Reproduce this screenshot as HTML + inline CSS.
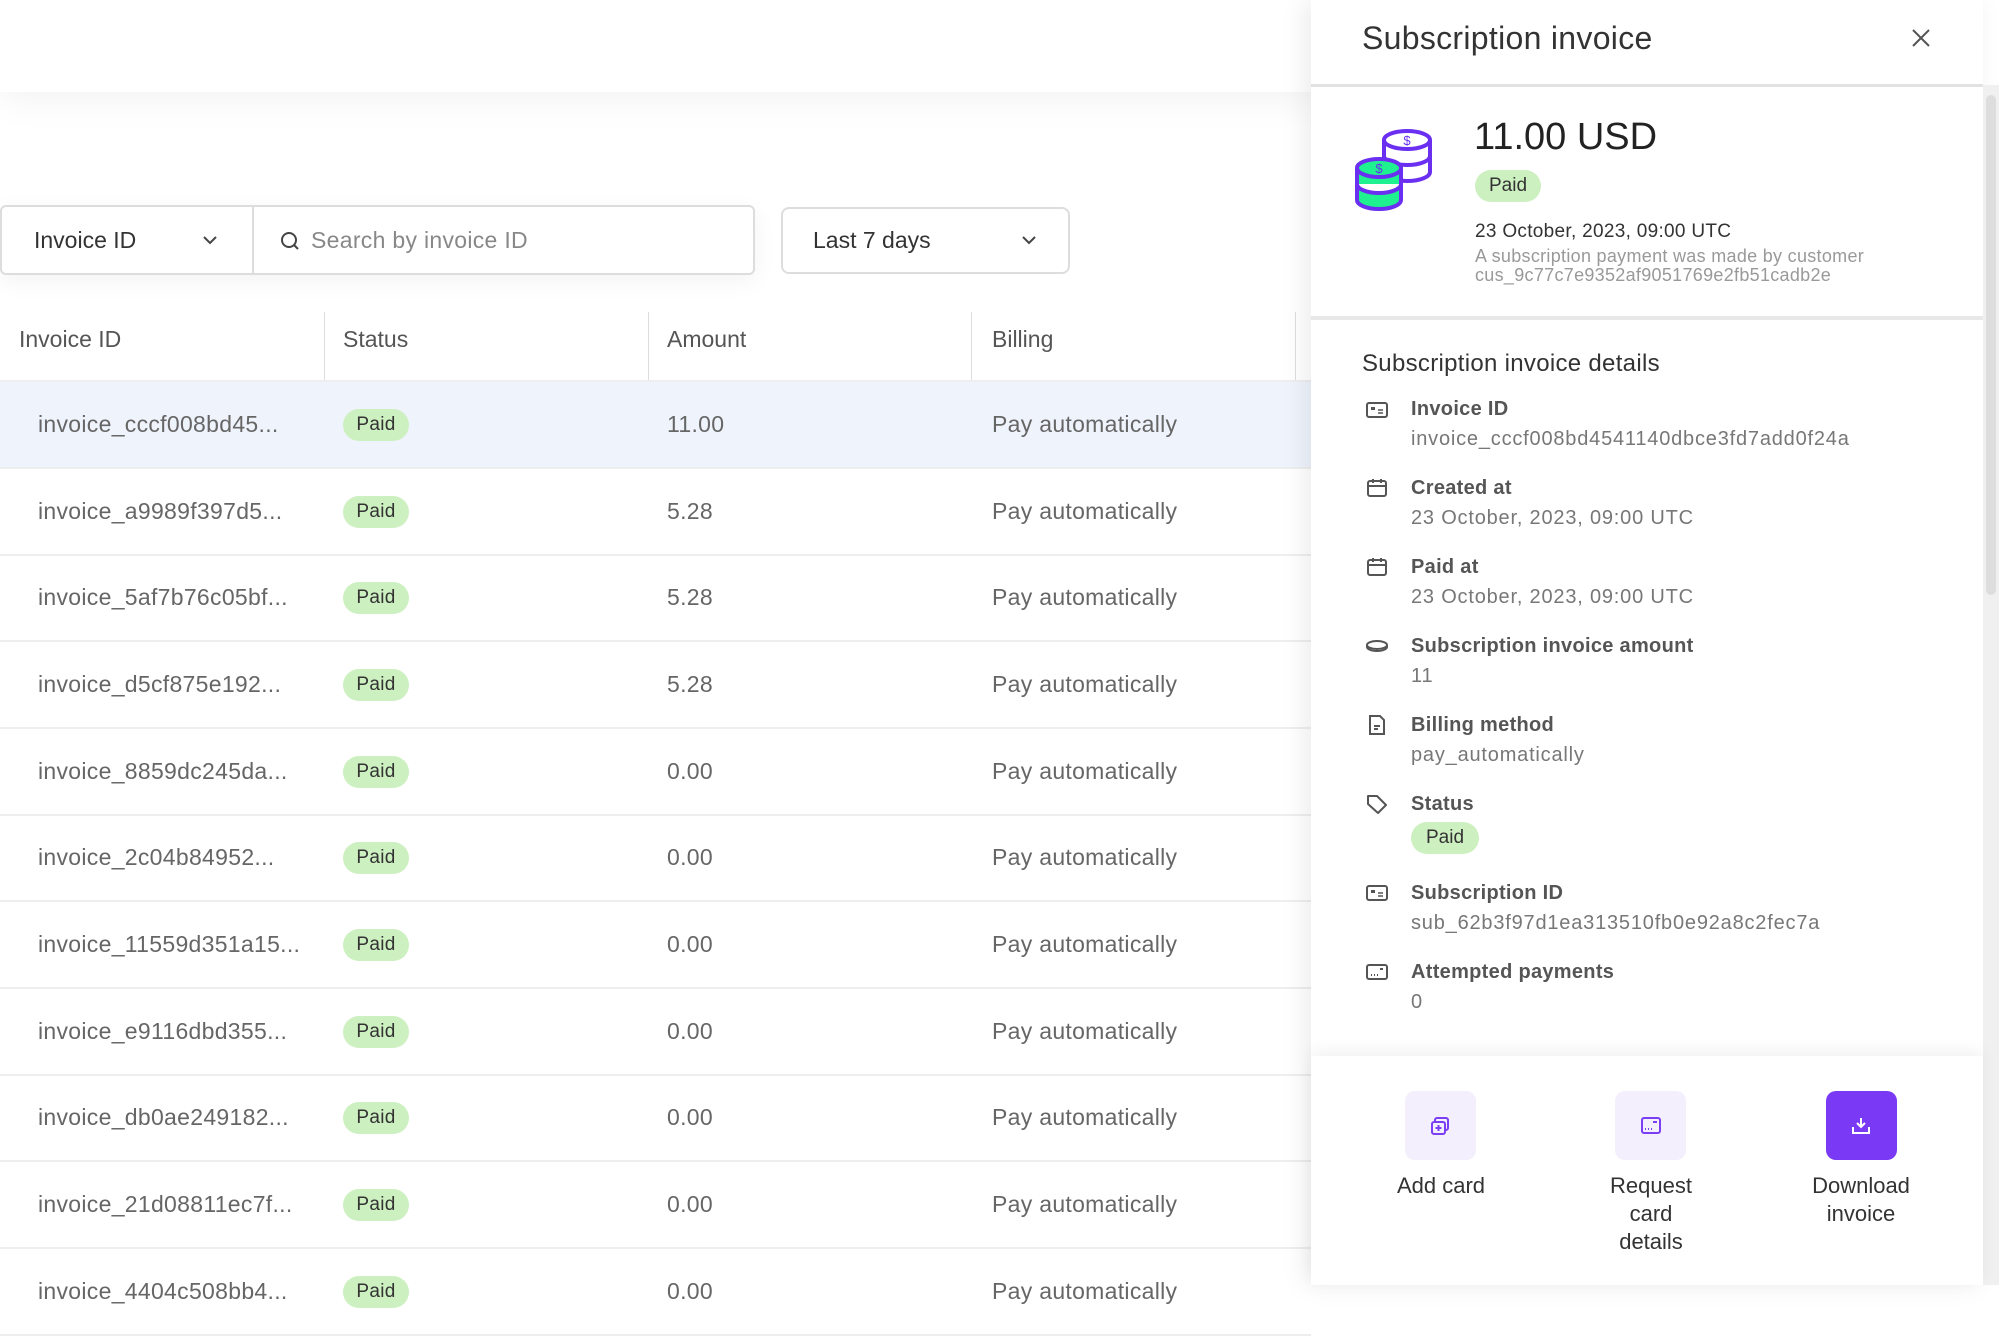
<!DOCTYPE html>
<html><head><meta charset="utf-8">
<style>
*{box-sizing:border-box;margin:0;padding:0}
body{width:1999px;height:1285px;overflow:hidden;background:#fff;font-family:"Liberation Sans",sans-serif;position:relative;color:#333}
.abs{position:absolute}
.topbar{left:0;top:0;width:1320px;height:92px;background:#fff;box-shadow:0 6px 40px rgba(0,0,0,0.06)}
.badge{position:absolute;background:#cdf0c0;color:#333;border-radius:16px;font-size:19px;text-align:center;line-height:32px;height:32px}
.hdr{position:absolute;top:305px;height:69px;font-size:23px;color:#555;line-height:69px}
.vd{position:absolute;top:312px;height:69px;width:1px;background:#ddd}
.row{position:absolute;left:0;width:1311px;height:87px;border-bottom:2px solid #eee;font-size:23px;color:#666;letter-spacing:0.3px}
.row span{position:absolute;top:0;line-height:85px}
.panel{left:1311px;top:0;width:672px;height:1285px;background:#fff;box-shadow:-6px 0 24px rgba(0,0,0,0.08)}
.lbl{position:absolute;left:1411px;font-size:20px;font-weight:bold;color:#555;letter-spacing:0.3px}
.val{position:absolute;left:1411px;font-size:20px;color:#777;letter-spacing:0.8px}
.ic{position:absolute;left:1365px}
.btn{position:absolute;top:1091px;width:71px;height:69px;border-radius:10px;background:#f3effd}
.bl{position:absolute;top:1172px;width:160px;text-align:center;font-size:22px;line-height:28px;color:#333}
</style></head><body>
<div class="abs topbar"></div>

<div class="abs" style="left:0;top:205px;width:755px;height:70px;border:2px solid #ddd;border-radius:6px;background:#fff;box-shadow:0 6px 24px rgba(0,0,0,0.05)"></div>
<div class="abs" style="left:252px;top:206px;width:2px;height:68px;background:#ddd"></div>
<div class="abs" style="left:34px;top:227px;font-size:23px;color:#333">Invoice ID</div>
<svg class="abs" style="left:201px;top:234px" width="18" height="12" viewBox="0 0 18 12"><path d="M3 3l6 6 6-6" fill="none" stroke="#444" stroke-width="2"/></svg>
<svg class="abs" style="left:279px;top:230px" width="22" height="22" viewBox="0 0 22 22"><circle cx="10" cy="10" r="7" fill="none" stroke="#444" stroke-width="2"/><path d="M15 15l4 4" stroke="#444" stroke-width="2"/></svg>
<div class="abs" style="left:311px;top:227px;font-size:23px;color:#888;letter-spacing:0.3px">Search by invoice ID</div>
<div class="abs" style="left:781px;top:207px;width:289px;height:67px;border:2px solid #ddd;border-radius:8px;background:#fff"></div>
<div class="abs" style="left:813px;top:227px;font-size:23px;color:#333">Last 7 days</div>
<svg class="abs" style="left:1020px;top:234px" width="18" height="12" viewBox="0 0 18 12"><path d="M3 3l6 6 6-6" fill="none" stroke="#444" stroke-width="2"/></svg>

<div class="hdr" style="left:19px">Invoice ID</div>
<div class="hdr" style="left:343px">Status</div>
<div class="hdr" style="left:667px">Amount</div>
<div class="hdr" style="left:992px">Billing</div>
<div class="vd" style="left:324px"></div><div class="vd" style="left:648px"></div><div class="vd" style="left:971px"></div><div class="vd" style="left:1295px"></div>
<div class="abs" style="left:0;top:380px;width:1311px;height:2px;background:#eee"></div>

<div class="row" style="top:382px;background:#eff3fc"><span style="left:38px">invoice_cccf008bd45...</span><div class="badge" style="left:343px;top:27px;width:66px">Paid</div><span style="left:667px">11.00</span><span style="left:992px">Pay automatically</span></div>
<div class="row" style="top:469px"><span style="left:38px">invoice_a9989f397d5...</span><div class="badge" style="left:343px;top:27px;width:66px">Paid</div><span style="left:667px">5.28</span><span style="left:992px">Pay automatically</span></div>
<div class="row" style="top:555px"><span style="left:38px">invoice_5af7b76c05bf...</span><div class="badge" style="left:343px;top:27px;width:66px">Paid</div><span style="left:667px">5.28</span><span style="left:992px">Pay automatically</span></div>
<div class="row" style="top:642px"><span style="left:38px">invoice_d5cf875e192...</span><div class="badge" style="left:343px;top:27px;width:66px">Paid</div><span style="left:667px">5.28</span><span style="left:992px">Pay automatically</span></div>
<div class="row" style="top:729px"><span style="left:38px">invoice_8859dc245da...</span><div class="badge" style="left:343px;top:27px;width:66px">Paid</div><span style="left:667px">0.00</span><span style="left:992px">Pay automatically</span></div>
<div class="row" style="top:815px"><span style="left:38px">invoice_2c04b84952...</span><div class="badge" style="left:343px;top:27px;width:66px">Paid</div><span style="left:667px">0.00</span><span style="left:992px">Pay automatically</span></div>
<div class="row" style="top:902px"><span style="left:38px">invoice_11559d351a15...</span><div class="badge" style="left:343px;top:27px;width:66px">Paid</div><span style="left:667px">0.00</span><span style="left:992px">Pay automatically</span></div>
<div class="row" style="top:989px"><span style="left:38px">invoice_e9116dbd355...</span><div class="badge" style="left:343px;top:27px;width:66px">Paid</div><span style="left:667px">0.00</span><span style="left:992px">Pay automatically</span></div>
<div class="row" style="top:1075px"><span style="left:38px">invoice_db0ae249182...</span><div class="badge" style="left:343px;top:27px;width:66px">Paid</div><span style="left:667px">0.00</span><span style="left:992px">Pay automatically</span></div>
<div class="row" style="top:1162px"><span style="left:38px">invoice_21d08811ec7f...</span><div class="badge" style="left:343px;top:27px;width:66px">Paid</div><span style="left:667px">0.00</span><span style="left:992px">Pay automatically</span></div>
<div class="row" style="top:1249px"><span style="left:38px">invoice_4404c508bb4...</span><div class="badge" style="left:343px;top:27px;width:66px">Paid</div><span style="left:667px">0.00</span><span style="left:992px">Pay automatically</span></div>

<div class="abs panel"></div>
<div class="abs" style="left:1983px;top:85px;width:16px;height:1200px;background:#f0f0f0"></div>
<div class="abs" style="left:1986px;top:95px;width:10px;height:500px;background:#ddd;border-radius:5px"></div>
<div class="abs" style="left:1362px;top:20px;font-size:32px;color:#333;letter-spacing:0.3px">Subscription invoice</div>
<svg class="abs" style="left:1909px;top:26px" width="24" height="24" viewBox="0 0 24 24"><path d="M4 4l16 16M20 4L4 20" stroke="#555" stroke-width="2"/></svg>
<div class="abs" style="left:1311px;top:84px;width:672px;height:3px;background:#e2e2e2"></div>

<svg class="abs" style="left:1340px;top:110px" width="110" height="110" viewBox="0 0 110 110">
<g stroke="#6a2ff0" stroke-width="4" fill="#fff">
<path d="M44 30v32a23 9 0 0 0 46 0V30"/><path d="M44 46a23 9 0 0 0 46 0"/>
<ellipse cx="67" cy="30" rx="23" ry="9"/>
<path d="M17 58v32a22 9 0 0 0 44 0V58" fill="#1ff090"/><path d="M17 74a22 9 0 0 0 44 0"/>
<ellipse cx="39" cy="58" rx="22" ry="9" fill="#1ff090"/>
</g>
<text x="67" y="35" font-size="13" fill="#6a2ff0" text-anchor="middle" font-family="Liberation Sans">$</text>
<text x="39" y="63" font-size="13" fill="#6a2ff0" text-anchor="middle" font-family="Liberation Sans">$</text>
</svg>
<div class="abs" style="left:1474px;top:116px;font-size:38px;color:#222">11.00 USD</div>
<div class="badge" style="left:1475px;top:170px;width:66px">Paid</div>
<div class="abs" style="left:1475px;top:221px;font-size:19px;color:#333;letter-spacing:0.3px">23 October, 2023, 09:00 UTC</div>
<div class="abs" style="left:1475px;top:247px;font-size:18px;color:#999;line-height:19px;letter-spacing:0.3px">A subscription payment was made by customer<br>cus_9c77c7e9352af9051769e2fb51cadb2e</div>
<div class="abs" style="left:1311px;top:316px;width:672px;height:4px;background:#e8e8e8"></div>

<div class="abs" style="left:1362px;top:350px;font-size:24px;color:#333;letter-spacing:0.3px">Subscription invoice details</div>

<svg class="ic" style="top:398px" width="24" height="24" viewBox="0 0 24 24"><rect x="2" y="5" width="20" height="14" rx="2" fill="none" stroke="#555" stroke-width="2"/><rect x="6" y="9" width="4" height="3" fill="#555"/><path d="M13 12h5M13 15h5" stroke="#555" stroke-width="1.5"/></svg>
<div class="lbl" style="top:398px">Invoice ID</div>
<div class="val" style="top:428px">invoice_cccf008bd4541140dbce3fd7add0f24a</div>

<svg class="ic" style="top:476px" width="24" height="24" viewBox="0 0 24 24"><rect x="3" y="5" width="18" height="15" rx="2" fill="none" stroke="#555" stroke-width="2"/><path d="M3 10h18M8 3v4M16 3v4" stroke="#555" stroke-width="2"/></svg>
<div class="lbl" style="top:477px">Created at</div>
<div class="val" style="top:507px">23 October, 2023, 09:00 UTC</div>

<svg class="ic" style="top:555px" width="24" height="24" viewBox="0 0 24 24"><rect x="3" y="5" width="18" height="15" rx="2" fill="none" stroke="#555" stroke-width="2"/><path d="M3 10h18M8 3v4M16 3v4" stroke="#555" stroke-width="2"/></svg>
<div class="lbl" style="top:556px">Paid at</div>
<div class="val" style="top:586px">23 October, 2023, 09:00 UTC</div>

<svg class="ic" style="top:634px" width="24" height="24" viewBox="0 0 24 24"><ellipse cx="12" cy="11" rx="10" ry="4" fill="none" stroke="#555" stroke-width="2"/><path d="M2 11v2c0 2 4 4 10 4s10-2 10-4v-2" fill="none" stroke="#555" stroke-width="2"/></svg>
<div class="lbl" style="top:635px">Subscription invoice amount</div>
<div class="val" style="top:665px">11</div>

<svg class="ic" style="top:713px" width="24" height="24" viewBox="0 0 24 24"><path d="M5 3h10l4 4v14H5z" fill="none" stroke="#555" stroke-width="2"/><path d="M9 13h6M9 16h4" stroke="#555" stroke-width="2"/></svg>
<div class="lbl" style="top:714px">Billing method</div>
<div class="val" style="top:744px">pay_automatically</div>

<svg class="ic" style="top:792px" width="24" height="24" viewBox="0 0 24 24"><path d="M3 4h9l9 9-8 8-10-9z" fill="none" stroke="#555" stroke-width="2" stroke-linejoin="round"/></svg>
<div class="lbl" style="top:793px">Status</div>
<div class="badge" style="left:1411px;top:822px;width:68px">Paid</div>

<svg class="ic" style="top:881px" width="24" height="24" viewBox="0 0 24 24"><rect x="2" y="5" width="20" height="14" rx="2" fill="none" stroke="#555" stroke-width="2"/><rect x="6" y="9" width="4" height="3" fill="#555"/><path d="M13 12h5M13 15h5" stroke="#555" stroke-width="1.5"/></svg>
<div class="lbl" style="top:882px">Subscription ID</div>
<div class="val" style="top:912px">sub_62b3f97d1ea313510fb0e92a8c2fec7a</div>

<svg class="ic" style="top:960px" width="24" height="24" viewBox="0 0 24 24"><rect x="2" y="5" width="20" height="14" rx="2" fill="none" stroke="#555" stroke-width="2"/><path d="M6 15h1M9 15h1M12 15h1M15 9h3" stroke="#555" stroke-width="2"/></svg>
<div class="lbl" style="top:961px">Attempted payments</div>
<div class="val" style="top:991px">0</div>

<div class="abs" style="left:1311px;top:1056px;width:672px;height:229px;background:#fff;box-shadow:0 -6px 14px rgba(0,0,0,0.05)"></div>
<div class="btn" style="left:1405px"></div>
<svg class="abs" style="left:1428px;top:1114px" width="24" height="24" viewBox="0 0 24 24"><rect x="7" y="4" width="13" height="12" rx="2" fill="none" stroke="#7a3ef5" stroke-width="2"/><rect x="4" y="8" width="13" height="12" rx="2" fill="#f3effd" stroke="#7a3ef5" stroke-width="2"/><path d="M10.5 11v6M7.5 14h6" stroke="#7a3ef5" stroke-width="2"/></svg>
<div class="bl" style="left:1361px">Add card</div>
<div class="btn" style="left:1615px"></div>
<svg class="abs" style="left:1639px;top:1114px" width="24" height="24" viewBox="0 0 24 24"><rect x="3" y="4" width="18" height="15" rx="2" fill="none" stroke="#7a3ef5" stroke-width="2"/><path d="M14 8h4M6 15h1M9 15h1M12 15h1" stroke="#7a3ef5" stroke-width="2"/></svg>
<div class="bl" style="left:1571px">Request<br>card<br>details</div>
<div class="btn" style="left:1826px;background:#7a3af5"></div>
<svg class="abs" style="left:1849px;top:1114px" width="24" height="24" viewBox="0 0 24 24"><path d="M12 4v9M8 9l4 4 4-4M4 13v6h16v-6" fill="none" stroke="#fff" stroke-width="2"/></svg>
<div class="bl" style="left:1781px">Download<br>invoice</div>
</body></html>
